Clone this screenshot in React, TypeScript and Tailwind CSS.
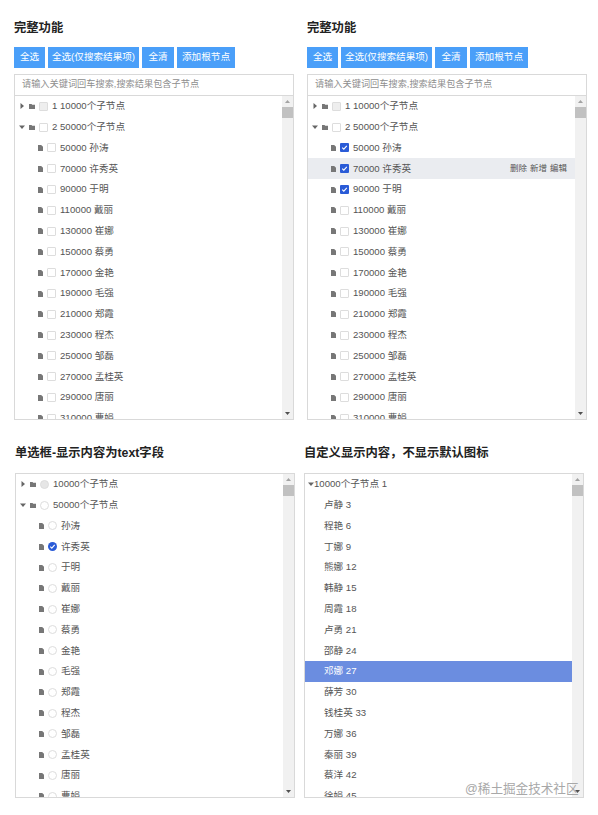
import type { ReactNode } from "react";

const buttons = ["全选", "全选(仅搜索结果项)", "全清", "添加根节点"];
const buttonWidths = ["w-[31px]", "w-[91px]", "w-[32px]", "w-[58px]"];

const people = [
  ["50000", "孙涛"],
  ["70000", "许秀英"],
  ["90000", "于明"],
  ["110000", "戴丽"],
  ["130000", "崔娜"],
  ["150000", "蔡勇"],
  ["170000", "金艳"],
  ["190000", "毛强"],
  ["210000", "郑霞"],
  ["230000", "程杰"],
  ["250000", "邹磊"],
  ["270000", "孟桂英"],
  ["290000", "唐丽"],
  ["310000", "曹娟"],
];

const custom = [
  "卢静 3",
  "程艳 6",
  "丁娜 9",
  "熊娜 12",
  "韩静 15",
  "周霞 18",
  "卢勇 21",
  "邵静 24",
  "邓娜 27",
  "薛芳 30",
  "钱桂英 33",
  "万娜 36",
  "秦丽 39",
  "蔡洋 42",
  "徐娟 45",
];

function Arrow({ open }: { open?: boolean }) {
  return (
    <svg className="w-[6px] h-[6px] shrink-0" viewBox="0 0 6 6">
      <path d={open ? "M0 1.5h6L3 5z" : "M1.5 0l3.5 3-3.5 3z"} fill="#666" />
    </svg>
  );
}

function Folder() {
  return (
    <svg className="w-[6px] h-[5px] shrink-0" viewBox="0 0 6 5">
      <path d="M0 0h2.5l.7.8H6V5H0z" fill="#777" />
    </svg>
  );
}

function FileIcon() {
  return (
    <svg className="w-[5px] h-[6px] shrink-0" viewBox="0 0 5 6">
      <path d="M0 0h3.2L5 1.8V6H0z" fill="#777" />
    </svg>
  );
}

function Checkbox({ checked, disabled }: { checked?: boolean; disabled?: boolean }) {
  if (checked) {
    return (
      <span className="w-[9px] h-[9px] shrink-0 rounded-[1px] bg-[#2a5bd7] flex items-center justify-center">
        <svg className="w-[7px] h-[7px]" viewBox="0 0 7 7" fill="none">
          <path d="M1.2 3.6l1.6 1.6 3-3.4" stroke="#fff" strokeWidth="1.1" />
        </svg>
      </span>
    );
  }
  return (
    <span
      className={`w-[9px] h-[9px] shrink-0 rounded-[1px] border border-[#ddd] ${
        disabled ? "bg-[#eee]" : "bg-white"
      }`}
    />
  );
}

function Radio({ checked, disabled }: { checked?: boolean; disabled?: boolean }) {
  if (checked) {
    return (
      <span className="w-[9px] h-[9px] shrink-0 rounded-full bg-[#2a5bd7] flex items-center justify-center">
        <svg className="w-[7px] h-[7px]" viewBox="0 0 7 7" fill="none">
          <path d="M1.3 3.6l1.5 1.5 2.9-3.2" stroke="#fff" strokeWidth="1.1" />
        </svg>
      </span>
    );
  }
  return (
    <span
      className={`w-[9px] h-[9px] shrink-0 rounded-full border border-[#ddd] ${
        disabled ? "bg-[#e6e6e6]" : "bg-white"
      }`}
    />
  );
}

function Scrollbar() {
  return (
    <div className="w-[11px] shrink-0 bg-[#f1f1f1] flex flex-col items-center justify-between pb-[4px] relative">
      <div className="flex flex-col items-center w-full">
        <svg className="w-[5px] h-[3px] mt-[4px]" viewBox="0 0 5 3">
          <path d="M2.5 0L5 3H0z" fill="#a3a3a3" />
        </svg>
        <div className="w-full h-[11px] bg-[#c1c1c1] mt-[4px]" />
      </div>
      <svg className="w-[5px] h-[3px]" viewBox="0 0 5 3">
        <path d="M0 0h5L2.5 3z" fill="#505050" />
      </svg>
    </div>
  );
}

function Row({
  indent,
  children,
  active,
  selected,
}: {
  indent: string;
  children: ReactNode;
  active?: boolean;
  selected?: boolean;
}) {
  return (
    <div
      className={`h-[20.8px] shrink-0 flex items-center gap-[4px] ${indent} ${
        active ? "bg-[#eaecf0]" : ""
      } ${selected ? "bg-[#6b8de0] text-white" : ""}`}
    >
      {children}
    </div>
  );
}

function CheckTree({ checkedAll }: { checkedAll?: boolean }) {
  return (
    <div className="flex flex-1 min-h-0">
      <div className="flex-1 min-w-0 overflow-hidden">
        <Row indent="pl-[4px]">
          <Arrow />
          <Folder />
          <Checkbox disabled />
          <span>1 10000个子节点</span>
        </Row>
        <Row indent="pl-[4px]">
          <Arrow open />
          <Folder />
          <Checkbox />
          <span>2 50000个子节点</span>
        </Row>
        {people.map(([id, name], i) => (
          <Row key={id} indent="pl-[23px]" active={checkedAll && i === 1}>
            <FileIcon />
            <Checkbox checked={checkedAll && i < 3} />
            <span>
              {id} {name}
            </span>
            {checkedAll && i === 1 && (
              <span className="ml-auto pr-[8px] text-[8.5px] flex gap-[3px]">
                <span>删除</span>
                <span>新增</span>
                <span>编辑</span>
              </span>
            )}
          </Row>
        ))}
      </div>
      <Scrollbar />
    </div>
  );
}

function FullPanel({ checkedAll }: { checkedAll?: boolean }) {
  return (
    <section className="w-[280px]">
      <h2 className="h-[20px] flex items-center text-[12.3px] font-bold text-[#222]">完整功能</h2>
      <div className="flex gap-[3px] mt-[9px]">
        {buttons.map((label, i) => (
          <button
            key={label}
            className={`h-[21px] ${buttonWidths[i]} bg-[#4a9ff9] text-white text-[9.6px] flex items-center justify-center`}
          >
            {label}
          </button>
        ))}
      </div>
      <div className="mt-[6px] h-[346px] border border-[#d9d9d9] flex flex-col">
        <div className="h-[21px] shrink-0 border-b border-[#d9d9d9] flex items-center pl-[7px] text-[#8e8e8e] text-[9.2px]">
          请输入关键词回车搜索,搜索结果包含子节点
        </div>
        <CheckTree checkedAll={checkedAll} />
      </div>
    </section>
  );
}

function RadioPanel() {
  return (
    <section className="w-[280px]">
      <h2 className="h-[20px] flex items-center text-[12.3px] font-bold text-[#222]">
        单选框-显示内容为text字段
      </h2>
      <div className="mt-[10px] h-[325px] border border-[#d9d9d9] flex">
        <div className="flex-1 min-w-0 overflow-hidden">
          <Row indent="pl-[4px]">
            <Arrow />
            <Folder />
            <Radio disabled />
            <span>10000个子节点</span>
          </Row>
          <Row indent="pl-[4px]">
            <Arrow open />
            <Folder />
            <Radio />
            <span>50000个子节点</span>
          </Row>
          {people.map(([id, name], i) => (
            <Row key={id} indent="pl-[23px]">
              <FileIcon />
              <Radio checked={i === 1} />
              <span>{name}</span>
            </Row>
          ))}
        </div>
        <Scrollbar />
      </div>
    </section>
  );
}

function CustomPanel() {
  return (
    <section className="w-[280px]">
      <h2 className="h-[20px] flex items-center text-[12.3px] font-bold text-[#222]">
        自定义显示内容，不显示默认图标
      </h2>
      <div className="mt-[10px] h-[325px] border border-[#d9d9d9] flex">
        <div className="flex-1 min-w-0 overflow-hidden">
          <Row indent="pl-[3px]">
            <Arrow open />
            <span className="-ml-[4px]">10000个子节点 1</span>
          </Row>
          {custom.map((label, i) => (
            <Row key={label} indent="pl-[19px]" selected={i === 8}>
              <span>{label}</span>
            </Row>
          ))}
        </div>
        <Scrollbar />
      </div>
    </section>
  );
}

export default function App() {
  return (
    <div className="w-[598px] h-[815px] bg-white relative overflow-hidden text-[#555] text-[9.6px] font-['Liberation_Sans','Noto_Sans_CJK_SC',sans-serif]">
      <div className="flex pl-[14px] gap-[13px] pt-[18px]">
        <FullPanel />
        <FullPanel checkedAll />
      </div>
      <div className="flex pl-[15px] gap-[9px] pt-[23px]">
        <RadioPanel />
        <CustomPanel />
      </div>
      <div className="absolute left-[465px] top-[781px] text-[12.6px] leading-[16px] text-[#a8a8a8]">
        @稀土掘金技术社区
      </div>
    </div>
  );
}
